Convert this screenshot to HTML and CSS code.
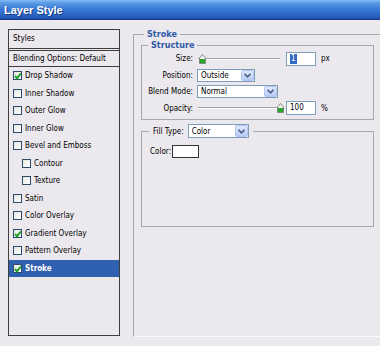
FILE: index.html
```html
<!DOCTYPE html>
<html lang="en">
<head>
  <meta charset="UTF-8" />
  <title>Layer Style</title>
  <link rel="stylesheet" href="styles.css">
</head>
<body>
  <div class="titlebar">Layer Style</div>

  <div class="dialog">
    <div class="styles-list">
      <div class="list-head">Styles</div>
      <div class="list-blend">Blending Options: Default</div>
      <div class="list-item"><span class="check on"></span>Drop Shadow</div>
      <div class="list-item"><span class="check"></span>Inner Shadow</div>
      <div class="list-item"><span class="check"></span>Outer Glow</div>
      <div class="list-item"><span class="check"></span>Inner Glow</div>
      <div class="list-item"><span class="check"></span>Bevel and Emboss</div>
      <div class="list-item sub"><span class="check"></span>Contour</div>
      <div class="list-item sub"><span class="check"></span>Texture</div>
      <div class="list-item"><span class="check"></span>Satin</div>
      <div class="list-item"><span class="check"></span>Color Overlay</div>
      <div class="list-item"><span class="check on"></span>Gradient Overlay</div>
      <div class="list-item"><span class="check"></span>Pattern Overlay</div>
      <div class="list-item selected"><span class="check on"></span>Stroke</div>
    </div>

    <fieldset class="group stroke-group">
      <legend>Stroke</legend>

      <fieldset class="group structure">
        <legend>Structure</legend>
        <div class="form-grid">
          <label>Size:</label>
          <div class="control">
            <div class="slider">
              <div class="track"></div>
              <svg class="thumb" style="left: 2px" width="7" height="10" viewBox="0 0 7 10">
                <path d="M0.5 4 L3.5 0.5 L6.5 4 V9.5 H0.5 Z" fill="#f4f4f0" stroke="#7d8a7d" />
                <rect x="1" y="5" width="5" height="4" fill="#2aa52a" />
              </svg>
            </div>
            <div class="field"><span class="sel">1</span></div>
            <span class="unit">px</span>
          </div>

          <label>Position:</label>
          <div class="control">
            <div class="dropdown pos">
              <span>Outside</span>
              <span class="drop-btn"><svg width="7" height="5" viewBox="0 0 7 5"><path d="M0.5 0.8 L3.5 3.8 L6.5 0.8" fill="none" stroke="#4a5f86" stroke-width="1.6" /></svg></span>
            </div>
          </div>

          <label>Blend Mode:</label>
          <div class="control">
            <div class="dropdown blend">
              <span>Normal</span>
              <span class="drop-btn"><svg width="7" height="5" viewBox="0 0 7 5"><path d="M0.5 0.8 L3.5 3.8 L6.5 0.8" fill="none" stroke="#4a5f86" stroke-width="1.6" /></svg></span>
            </div>
          </div>

          <label>Opacity:</label>
          <div class="control">
            <div class="slider">
              <div class="track"></div>
              <svg class="thumb" style="left: 80px" width="7" height="10" viewBox="0 0 7 10">
                <path d="M0.5 4 L3.5 0.5 L6.5 4 V9.5 H0.5 Z" fill="#f4f4f0" stroke="#7d8a7d" />
                <rect x="1" y="5" width="5" height="4" fill="#2aa52a" />
              </svg>
            </div>
            <div class="field">100</div>
            <span class="unit">%</span>
          </div>
        </div>
      </fieldset>

      <fieldset class="group fill">
        <legend>
          <span>Fill Type:</span>
          <span class="dropdown fill-type">
            <span>Color</span>
            <span class="drop-btn"><svg width="7" height="5" viewBox="0 0 7 5"><path d="M0.5 0.8 L3.5 3.8 L6.5 0.8" fill="none" stroke="#4a5f86" stroke-width="1.6" /></svg></span>
          </span>
        </legend>
        <div class="color-row">
          <span>Color:</span>
          <span class="swatch"></span>
        </div>
      </fieldset>
    </fieldset>
  </div>
</body>
</html>
```

FILE: styles.css
```css
/* Reset and base */
* {
  box-sizing: border-box;
  margin: 0;
  padding: 0;
}
html, body {
  width: 380px;
  height: 346px;
  overflow: hidden;
}
body {
  background: #ece9ee;
  color: #000;
  font-family: "DejaVu Sans Condensed", "Liberation Sans", sans-serif;
  font-size: 8px;
}


/* Window title bar */
.titlebar {
  height: 20px;
  padding: 3px 0 0 4px;
  background: linear-gradient(#84bbf3 0, #5c9be6 3px, #3f7fd9 8px, #2f6bcb 13px, #2657b4 18px, #1a3d92 19px, #1a3d92 20px);
  color: #fff;
  font: bold 11px/14px "Liberation Sans", sans-serif;
  text-shadow: 1px 1px 0 #1a3d80;
}


/* Dialog body: styles list + options */
.dialog {
  display: flex;
  align-items: flex-start;
  padding: 9px 0 0 8px;
}


/* Left list of layer styles */
.styles-list {
  flex: none;
  width: 112px;
  height: 307px;
  border: 1px solid #3e3e3e;
}
.list-head {
  height: 21px;
  line-height: 18px;
  padding-left: 4px;
  border-bottom: 3px double #3e3e3e;
}
.list-blend {
  height: 16px;
  line-height: 15px;
  padding-left: 4px;
  border-bottom: 1px solid #3e3e3e;
}
.list-item {
  height: 17.5px;
  display: flex;
  align-items: center;
  gap: 3px;
  padding-left: 4px;
}
.list-item.sub {
  padding-left: 13px;
}
.list-item.selected {
  background: #3060b0;
  color: #fff;
  font-weight: bold;
}
.check {
  position: relative;
  flex: none;
  width: 9px;
  height: 9px;
  border: 1px solid #2a4a6e;
  background: linear-gradient(135deg, #e6e6e0, #fff);
}
.check.on::after {
  content: "";
  position: absolute;
  left: 2px;
  top: 0;
  width: 2px;
  height: 5px;
  border: solid #21a121;
  border-width: 0 2px 2px 0;
  transform: rotate(40deg);
}


/* Group boxes */
.group {
  border: 1px solid #a9a8ad;
  min-width: 0;
}
.group > legend {
  color: #2f5aa6;
  font-weight: bold;
  font-size: 9px;
  line-height: 11px;
  padding: 0 3px;
}
.stroke-group {
  flex: none;
  width: 260px;
  height: 308px;
  margin-left: 13px;
  padding: 0 0 0 7px;
  border-bottom-color: #fafafa;
}
.stroke-group > legend {
  margin-left: 3px;
}
.structure {
  width: 233px;
  height: 80px;
  padding: 0 6px;
}


/* Structure form */
.form-grid {
  display: grid;
  grid-template-columns: 45px 1fr;
  grid-template-rows: 17px 16px 17px 16px;
  column-gap: 4px;
  margin-top: -1px;
}
.form-grid label {
  align-self: center;
  text-align: right;
  white-space: nowrap;
}
.control {
  display: flex;
  align-items: center;
}
.slider {
  position: relative;
  width: 84px;
  height: 10px;
  display: flex;
  align-items: center;
}
.track {
  width: 82px;
  margin-left: 1px;
  height: 2px;
  border-top: 1px solid #a3a29f;
  border-bottom: 1px solid #fff;
}
.thumb {
  position: absolute;
  top: 0;
}
.field {
  width: 30px;
  height: 14px;
  margin-left: 5px;
  padding-left: 3px;
  border: 1px solid #7f9db9;
  background: #fff;
  line-height: 12px;
}
.sel {
  display: inline-block;
  padding: 0 1px;
  background: #316ac5;
  color: #fff;
  line-height: 10px;
}
.unit {
  margin-left: 5px;
}


/* Drop-down boxes */
.dropdown {
  display: flex;
  align-items: center;
  height: 13px;
  border: 1px solid #7f9db9;
  background: #fff;
  padding-left: 3px;
  color: #000;
  font-weight: normal;
  font-size: 8px;
}
.dropdown > span:first-child {
  flex: 1;
}
.drop-btn {
  display: flex;
  align-items: center;
  justify-content: center;
  width: 13px;
  height: 11px;
  border: 1px solid #b3c6ef;
  border-radius: 2px;
  background: linear-gradient(#e1eafe, #b8cbf6);
}
.dropdown.pos {
  width: 58px;
}
.dropdown.blend {
  width: 81px;
}


/* Fill type group */
.fill {
  width: 233px;
  height: 103px;
  margin-top: 4px;
  padding: 0 6px;
}
.fill > legend {
  display: flex;
  align-items: center;
  gap: 4px;
  margin-left: 1px;
  padding: 0 4px;
  height: 14px;
  color: #000;
  font-weight: normal;
  font-size: 8px;
}
.dropdown.fill-type {
  width: 61px;
  height: 14px;
}
.dropdown.fill-type .drop-btn {
  height: 12px;
}
.color-row {
  display: flex;
  align-items: center;
  gap: 1px;
  padding: 7px 0 0 2px;
}
.swatch {
  width: 27px;
  height: 13px;
  border: 1px solid #333;
  background: #fff;
}
```
